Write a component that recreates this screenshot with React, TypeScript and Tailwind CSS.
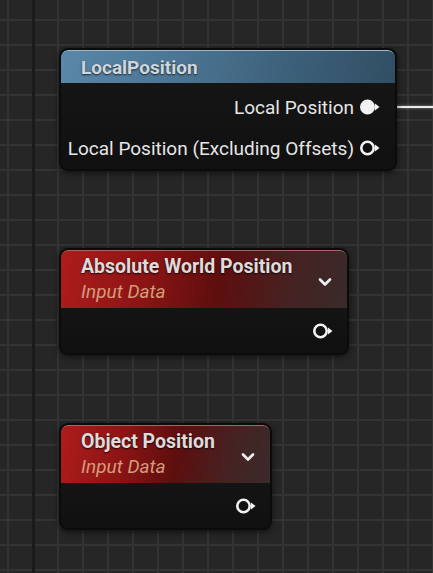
import React from "react";
import { ChevronDown } from "lucide-react";

type PinProps = { filled?: boolean };

function Pin({ filled }: PinProps) {
  return (
    <svg width="22" height="18" viewBox="0 0 22 18" className="shrink-0">
      <circle
        cx="8.5"
        cy="9"
        r="6.2"
        fill={filled ? "#f2f2f2" : "none"}
        stroke="#f2f2f2"
        strokeWidth="2.6"
      />
      <polygon points="16,5.5 20.5,9 16,12.5" fill="#f2f2f2" />
    </svg>
  );
}

function PinRow({ label, filled }: { label?: string; filled?: boolean }) {
  return (
    <div className="flex items-center justify-end gap-[5px] h-6">
      {label && <span className="text-[#e6e6e6] text-[19px] leading-none">{label}</span>}
      <Pin filled={filled} />
    </div>
  );
}

function InputNode({
  title,
  className,
}: {
  title: string;
  className: string;
}) {
  return (
    <div
      className={`absolute flex flex-col rounded-[9px] border-2 border-[#0b0b0b] bg-[#121212] shadow-[0_2px_6px_rgba(0,0,0,0.6)] overflow-hidden ${className}`}
    >
      <div className="h-[58px] shrink-0 flex items-center justify-between pl-5 pr-3 rounded-t-[7px] border-t border-[#a86565] bg-[linear-gradient(100deg,#ae1c1c_0%,#8c1414_30%,#5e0e0e_55%,#452222_80%,#3a2a2a_100%)]">
        <div className="flex flex-col gap-[3px]">
          <span className="text-[#dcdcdc] text-[19.5px] font-bold leading-[22px] [text-shadow:0_1px_2px_rgba(0,0,0,0.8)]">
            {title}
          </span>
          <span className="text-[#d49c7c] text-[19px] italic leading-[22px]">Input Data</span>
        </div>
        <ChevronDown size={20} strokeWidth={3.2} color="#f0f0f0" className="mt-1" />
      </div>
      <div className="flex-1 flex items-center justify-end pr-[13px] bg-[linear-gradient(180deg,#141414,#101010)]">
        <Pin />
      </div>
    </div>
  );
}

export default function App() {
  return (
    <div
      className="relative w-[433px] h-[573px] overflow-hidden bg-[#262626] font-['Roboto','Liberation_Sans',sans-serif]"
    >
      {/* grid */}
      <div className="absolute inset-0 bg-[linear-gradient(to_right,#333333_2px,transparent_2px),linear-gradient(to_bottom,#333333_2px,transparent_2px)] bg-[size:25px_25px] bg-[position:7px_19px]" />
      <div className="absolute top-0 bottom-0 left-[32px] w-[3px] bg-[#1b1b1b]" />

      {/* wire */}
      <div className="absolute left-[380px] top-[106px] w-[60px] h-[2px] bg-[#ececec] shadow-[0_0_3px_rgba(255,255,255,0.5)]" />

      {/* LocalPosition node */}
      <div className="absolute left-[59px] top-[48px] w-[338px] h-[123px] flex flex-col rounded-[9px] border-2 border-[#0b0b0b] bg-[#121212] shadow-[0_2px_6px_rgba(0,0,0,0.6)] overflow-hidden">
        <div className="h-[33px] shrink-0 flex items-center pl-5 rounded-t-[7px] border-t border-[#9db8cc] bg-[linear-gradient(100deg,#5a87a8_0%,#4c7594_35%,#3c5f78_70%,#314f63_100%)]">
          <span className="text-[#cfd6dc] text-[19px] font-bold leading-none [text-shadow:0_1px_2px_rgba(0,0,0,0.7)]">
            LocalPosition
          </span>
        </div>
        <div className="flex-1 flex flex-col pt-[12px] gap-[17px] pr-[14px] bg-[linear-gradient(180deg,#151515,#101010)]">
          <PinRow label="Local Position" filled />
          <PinRow label="Local Position (Excluding Offsets)" />
        </div>
      </div>

      <InputNode title="Absolute World Position" className="left-[59px] top-[248px] w-[290px] h-[107px]" />
      <InputNode title="Object Position" className="left-[59px] top-[423px] w-[213px] h-[107px]" />
    </div>
  );
}
